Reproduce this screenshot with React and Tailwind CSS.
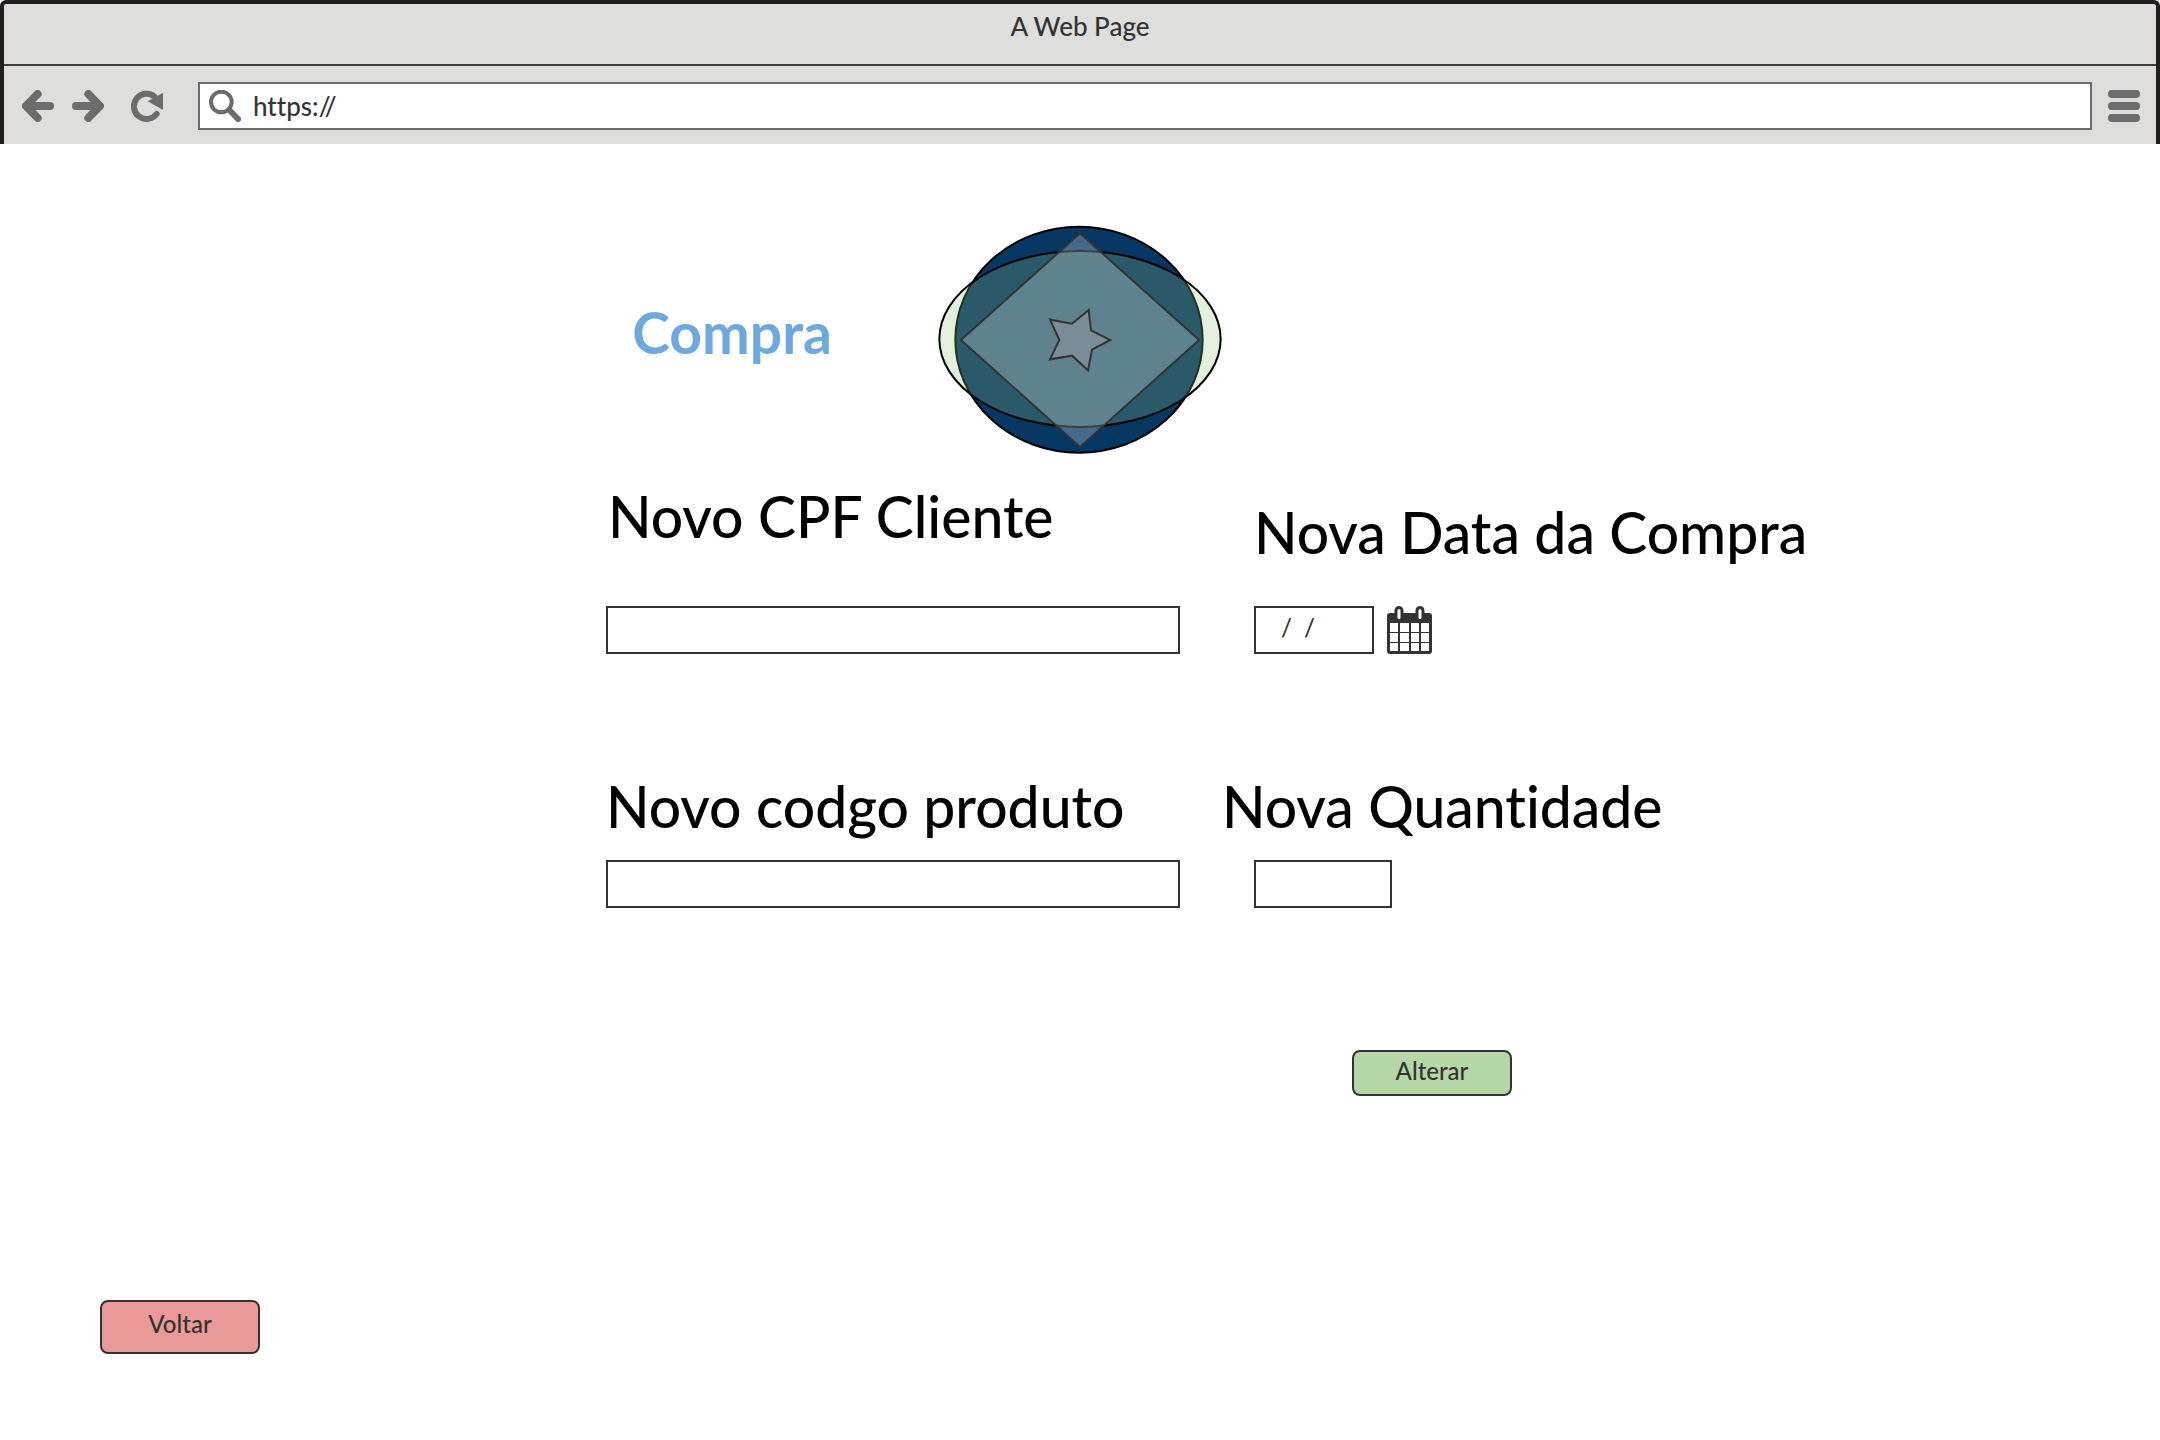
import React from "react";

const FONT = "font-['Lato',sans-serif] [font-variant-ligatures:none]";

function ArrowIcon({ className = "" }) {
  return (
    <svg viewBox="0 0 96 96" className={`size-8 ${className}`} fill="none" stroke="currentColor" strokeWidth="24" strokeLinecap="round" strokeLinejoin="round" aria-hidden="true">
      <path d="M47 12 12 48l35 36" />
      <path d="M16 48h68" />
    </svg>
  );
}

function ReloadIcon() {
  return (
    <svg viewBox="0 0 96 96" className="size-8" aria-hidden="true">
      <path d="M70 19A38 38 0 1 0 77 72" fill="none" stroke="currentColor" strokeWidth="18" strokeLinecap="round" />
      <path d="M96 8v52L50 34l14-8z" fill="currentColor" />
    </svg>
  );
}

function SearchIcon() {
  return (
    <svg viewBox="0 0 96 96" className="size-8 shrink-0 text-[#6c6c6c]" fill="none" stroke="currentColor" aria-hidden="true">
      <circle cx="37" cy="36" r="31" strokeWidth="12" />
      <path d="m61 60 26 27" strokeWidth="18" strokeLinecap="round" />
    </svg>
  );
}

function MenuIcon() {
  return (
    <svg viewBox="0 0 32 32" className="size-8" fill="currentColor" aria-hidden="true">
      <rect width="32" height="8" rx="4" />
      <rect y="12" width="32" height="8" rx="4" />
      <rect y="24" width="32" height="8" rx="4" />
    </svg>
  );
}

function CalendarIcon() {
  return (
    <svg viewBox="0 0 45 48" className="block h-12 w-[45px]" aria-hidden="true">
      <rect y="7" width="45" height="41" rx="3" fill="#333" />
      <g fill="#fff">
        {[17, 27, 37].map((y, row) =>
          [3, 13, 24, 34].map((x) => <rect key={`${x}-${y}`} x={x} y={y} width={x === 13 ? 9 : 8} height={row === 2 ? 8 : 9} />)
        )}
      </g>
      <g fill="#fff" stroke="#333" strokeWidth="3">
        <rect x="9" y="1.500" width="6" height="13" rx="3" />
        <rect x="30" y="1.500" width="6" height="13" rx="3" />
      </g>
    </svg>
  );
}

function Logo() {
  return (
    <svg viewBox="0 0 864 696" className="h-[232px] w-72" strokeWidth="6" role="img" aria-label="Logo">
      <ellipse cx="429" cy="347" rx="371" ry="339" fill="#073763" stroke="#000" />
      <ellipse cx="432" cy="345" rx="422" ry="264" fill="#93c47d" fillOpacity="0.25" stroke="#000" />
      <path d="M432 28 789 348 432 669 75 348z" fill="#fff" fillOpacity="0.25" stroke="#333" />
      <path d="m458 258 7 61 58 29-55 29-12 62-48-44-66 11 28-58-28-61 66 12z" fill="#d5a6bd" fillOpacity="0.25" stroke="#333" />
    </svg>
  );
}

function Field({ id, label, labelClass, inputClass, children, ...rest }) {
  return (
    <div className="flex flex-col items-start justify-end">
      <label htmlFor={id} className={`whitespace-nowrap text-[57px] font-medium leading-[64px] text-black ${labelClass}`}>
        {label}
      </label>
      <div className="flex w-full items-center gap-[13px]">
        <input id={id} type="text" className={`h-12 border-2 border-[#333] bg-white text-2xl font-medium text-[#333] outline-none ${inputClass}`} {...rest} />
        {children}
      </div>
    </div>
  );
}

function BrowserBar() {
  return (
    <header className="rounded-t-md border-x-4 border-t-4 border-[#231f20] bg-[#dededc] text-[#333]">
      <div className="h-[62px] border-b-2 border-[#404040] pt-1.5 text-center text-[26px] font-medium leading-8">A Web Page</div>
      <nav className="flex items-center pb-3.5 pl-[18px] pr-4 pt-4 text-[#6c6c6c]">
        <button type="button" aria-label="Back" className="mr-[18px]">
          <ArrowIcon />
        </button>
        <button type="button" aria-label="Forward" className="mr-[27px]">
          <ArrowIcon className="rotate-180" />
        </button>
        <button type="button" aria-label="Reload" className="mr-[35px]">
          <ReloadIcon />
        </button>
        <div className="mr-4 flex h-12 flex-1 items-center gap-3 border-2 border-[#6c6c6c] bg-white px-[9px]">
          <SearchIcon />
          <input type="text" aria-label="Address" defaultValue="https://" className="min-w-0 flex-1 bg-transparent text-[26px] font-medium text-[#333] outline-none" />
        </div>
        <button type="button" aria-label="Menu">
          <MenuIcon />
        </button>
      </nav>
    </header>
  );
}

export default function App() {
  return (
    <div className={`min-h-screen bg-white ${FONT}`}>
      <BrowserBar />
      <main className="pt-20">
        <div className="grid grid-cols-[1fr_auto_1fr] items-center">
          <h1 className="mb-4 mr-[104px] justify-self-end text-[57px] font-bold leading-[64px] text-[#6fa8dc]">Compra</h1>
          <Logo />
        </div>

        <form className="mt-7 grid grid-cols-[606fr_648fr_906fr] gap-y-[120px]">
          <div className="col-start-2 grid">
            <Field id="cpf" label="Novo CPF Cliente" labelClass="mb-[58px] pl-0.5" inputClass="mr-[74px] flex-1 px-3" />
          </div>
          <Field id="data" label="Nova Data da Compra" labelClass="mb-[42px]" inputClass="w-[120px] pb-1.5 pl-[25px]" defaultValue="/  /">
            <button type="button" aria-label="Abrir calendário">
              <CalendarIcon />
            </button>
          </Field>
          <div className="col-start-2 grid">
            <Field id="produto" label="Novo codgo produto" labelClass="mb-[22px]" inputClass="mr-[74px] flex-1 px-3" />
          </div>
          <Field id="quantidade" label="Nova Quantidade" labelClass="-ml-8 mb-[22px]" inputClass="w-[138px] px-3" />
          <button type="button" className="col-start-3 ml-[98px] mt-[22px] h-[46px] w-40 rounded-lg border-2 border-[#333] bg-[#b6d7a8] pb-1 text-2xl font-medium text-[#333]">
            Alterar
          </button>
        </form>

        <button type="button" className="mb-20 ml-[100px] mt-[204px] h-[54px] w-40 rounded-lg border-2 border-[#333] bg-[#ea9999] pb-1.5 text-2xl font-medium text-[#333]">
          Voltar
        </button>
      </main>
    </div>
  );
}
